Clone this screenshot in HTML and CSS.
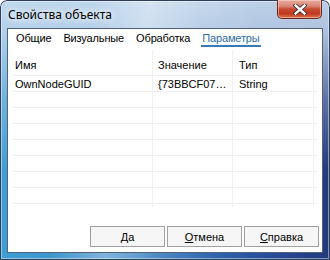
FILE: index.html
```html
<!DOCTYPE html>
<html lang="ru">
<head>
<meta charset="utf-8">
<title>Свойства объекта</title>
<link rel="stylesheet" href="styles.css">
</head>
<body>
<div class="window">
  <div class="titlebar">
    <span class="title">Свойства объекта</span>
    <button class="close" aria-label="Закрыть">
      <svg width="14" height="11" viewBox="0 0 14 11">
        <path d="M2.5 1.5 L11.5 9.5 M11.5 1.5 L2.5 9.5" stroke="#3a2a2a" stroke-width="4.2" stroke-linecap="square" fill="none"/>
        <path d="M2.5 1.5 L11.5 9.5 M11.5 1.5 L2.5 9.5" stroke="#ffffff" stroke-width="2.4" stroke-linecap="square" fill="none"/>
      </svg>
    </button>
  </div>
  <div class="client">
    <div class="tabs">
      <span class="tab">Общие</span>
      <span class="tab">Визуальные</span>
      <span class="tab">Обработка</span>
      <span class="tab active"><span class="tab-label">Параметры</span></span>
    </div>
    <div class="list">
      <div class="cell head c1">Имя</div>
      <div class="cell head c2">Значение</div>
      <div class="cell head c3">Тип</div>
      <div class="cell head c4"></div>

      <div class="cell c1">OwnNodeGUID</div>
      <div class="cell c2">{73BBCF07…</div>
      <div class="cell c3">String</div>
      <div class="cell c4"></div>

      <div class="cell c1"></div><div class="cell c2"></div><div class="cell c3"></div><div class="cell c4"></div>
      <div class="cell c1"></div><div class="cell c2"></div><div class="cell c3"></div><div class="cell c4"></div>
      <div class="cell c1"></div><div class="cell c2"></div><div class="cell c3"></div><div class="cell c4"></div>
      <div class="cell c1"></div><div class="cell c2"></div><div class="cell c3"></div><div class="cell c4"></div>
      <div class="cell c1"></div><div class="cell c2"></div><div class="cell c3"></div><div class="cell c4"></div>
      <div class="cell c1"></div><div class="cell c2"></div><div class="cell c3"></div><div class="cell c4"></div>
      <div class="cell c1"></div><div class="cell c2"></div><div class="cell c3"></div><div class="cell c4"></div>

      <div class="cell tail c1"></div><div class="cell tail c2"></div><div class="cell tail c3"></div><div class="cell tail c4"></div>
    </div>
    <div class="buttons">
      <button class="btn">Да</button>
      <button class="btn"><u>О</u>тмена</button>
      <button class="btn"><u>С</u>правка</button>
    </div>
  </div>
</div>
</body>
</html>
```
FILE: styles.css
```css
html, body {
  margin: 0;
  padding: 0;
  background: #ffffff;
}

.window {
  width: 330px;
  height: 260px;
  box-sizing: border-box;
  display: flex;
  flex-direction: column;
  padding: 0 7px 7px 7px;
  border-radius: 7px 7px 0 0;
  background:
    linear-gradient(100deg, rgba(255,255,255,0) 25%, rgba(255,255,255,0.35) 40%, rgba(255,255,255,0.1) 55%, rgba(255,255,255,0) 70%),
    linear-gradient(to bottom, rgba(206,222,240,0.9) 0px, rgba(200,218,238,0.85) 30px, rgba(200,218,238,0.35) 100px, rgba(200,218,238,0) 170px),
    linear-gradient(to right, #3f9fd2 0%, #3a86c4 40%, #2a56a0 75%, #22397c 100%);
  box-shadow: inset 0 0 0 1px #2c3d5e, inset 0 0 0 2px rgba(255,255,255,0.45);
  font-family: "Liberation Sans", Arial, sans-serif;
  font-size: 11px;
  color: #000;
}

.titlebar {
  height: 28px;
  flex: none;
  display: flex;
  align-items: flex-start;
  justify-content: space-between;
}

.title {
  margin-top: 7px;
  margin-left: 1px;
  font-family: "Noto Sans", "Liberation Sans", sans-serif;
  font-size: 12px;
  line-height: 16px;
  color: #000;
  text-shadow: 0 0 6px #ffffff, 0 0 10px rgba(255,255,255,0.9);
}

.close {
  width: 45px;
  height: 19px;
  margin: 0 1px 0 0;
  padding: 0;
  border: 1px solid #6a2a22;
  border-top: none;
  border-radius: 0 0 5px 5px;
  background: linear-gradient(to bottom, #e9ab9e 0%, #dc8473 35%, #c74a33 50%, #c2391f 75%, #d9734b 100%);
  box-shadow: inset 0 0 0 1px rgba(255,220,210,0.5);
  display: flex;
  align-items: center;
  justify-content: center;
}

.client {
  flex: 1;
  display: flex;
  flex-direction: column;
  background: #ffffff;
  border: 1px solid #51627e;
}

.tabs {
  height: 21px;
  flex: none;
  display: flex;
  align-items: flex-start;
  padding-left: 2px;
}

.tab {
  padding: 3px 6px 0 6px;
  line-height: 13px;
  white-space: nowrap;
  letter-spacing: -0.15px;
}

.tab.active {
  padding: 3px 5px 0 5px;
  color: #2c6ca8;
}

.tab-label {
  display: inline-block;
  padding: 0 1px 0 1px;
  border-bottom: 2px solid #3a79b6;
}

.list {
  height: 166px;
  flex: none;
  margin: 0 5px 0 4px;
  display: grid;
  grid-template-columns: 141px 80px 81px 1fr;
  grid-template-rows: 26px repeat(8, 16px) 3px;
}

.cell {
  border-right: 1px solid #f0f0f0;
  border-bottom: 1px solid #f0f0f0;
  line-height: 16px;
  white-space: nowrap;
  overflow: hidden;
}

.cell.c4 {
  border-right: none;
}

.cell.head {
  line-height: 26px;
  padding-top: 2px;
  box-sizing: border-box;
}

.cell.tail {
  border-bottom: none;
}

.c1 { padding-left: 3px; }
.c2 { padding-left: 5px; }
.c3 { padding-left: 6px; }

.buttons {
  flex: none;
  display: flex;
  justify-content: flex-end;
  gap: 2px;
  margin: 10px 3px 5px 0;
}

.btn {
  width: 75px;
  height: 21px;
  margin: 0;
  padding: 0;
  border: 1px solid #a0a0a0;
  background: #f6f6f6;
  font-family: "Liberation Sans", Arial, sans-serif;
  font-size: 11px;
  color: #000;
}

.btn u {
  text-decoration: underline;
}
```
